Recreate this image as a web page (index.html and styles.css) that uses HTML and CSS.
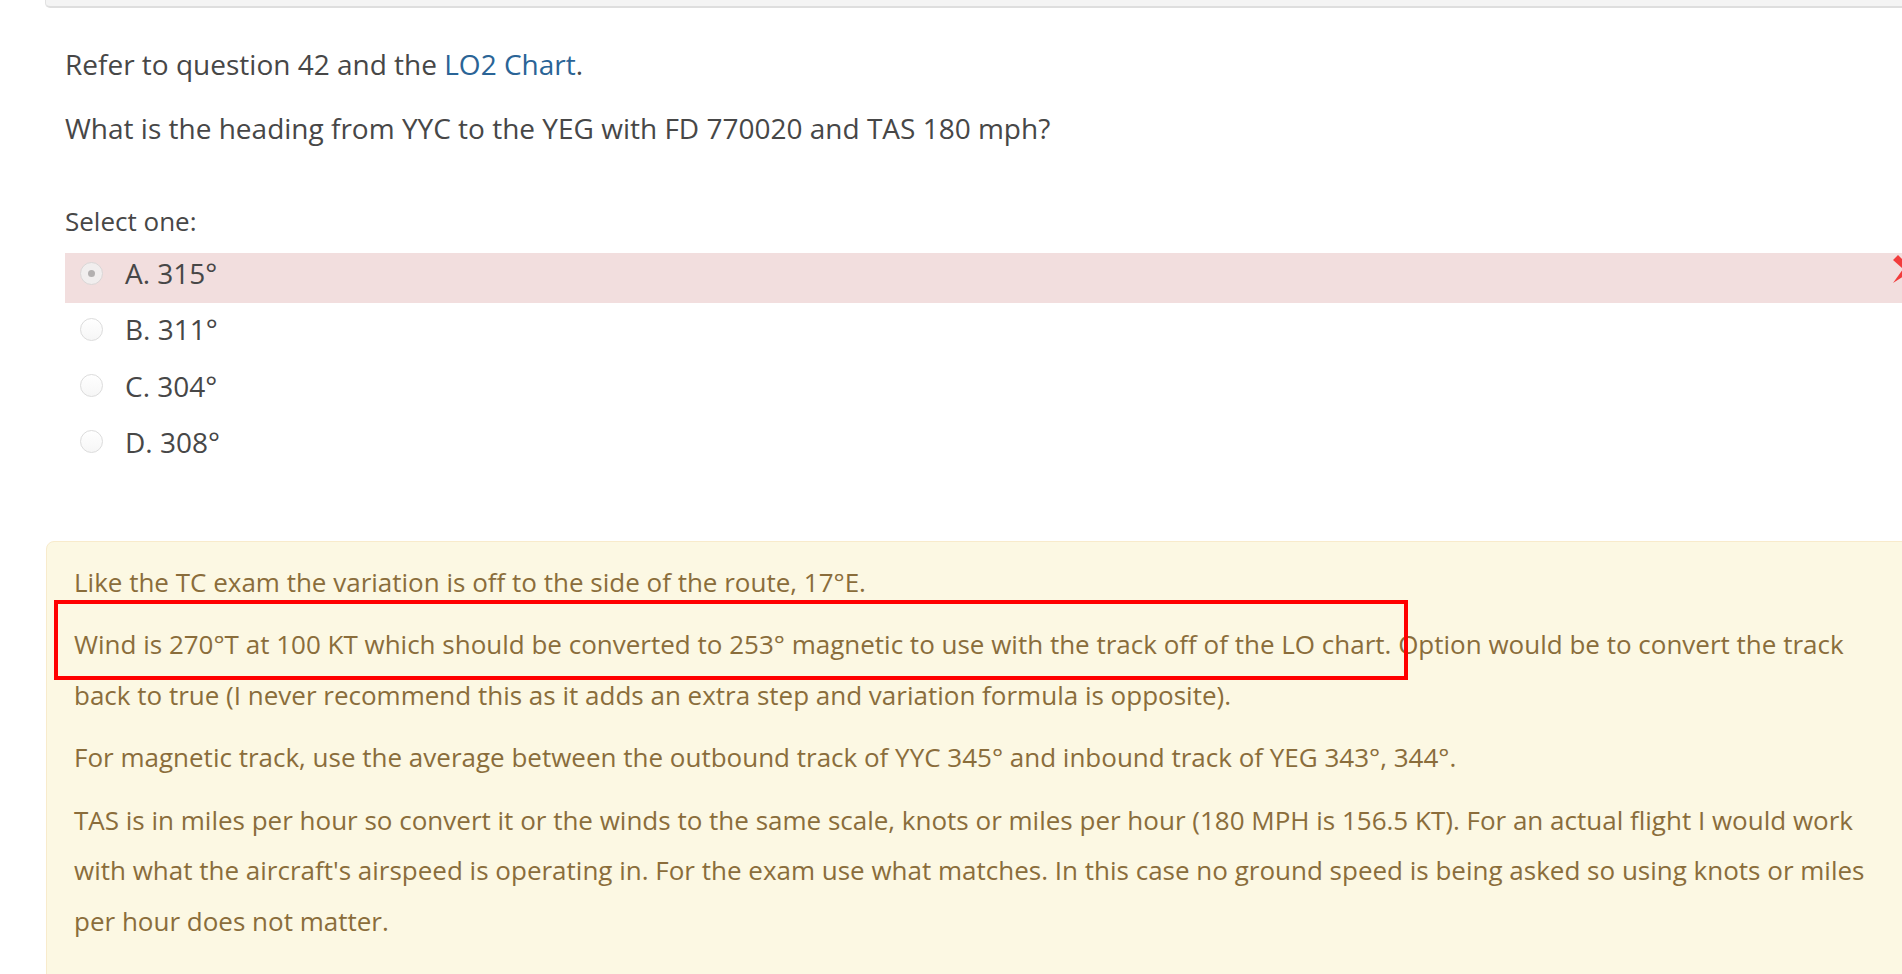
FILE: index.html
```html
<!DOCTYPE html>
<html lang="en">
<head>
<meta charset="utf-8">
<title>Question</title>
<link rel="stylesheet" href="styles.css">
</head>
<body>
<div class="page">
  <div class="topbar"></div>
  <div class="que">
    <div class="qtext">
      <p>Refer to question 42 and the <a class="link" href="#">LO2 Chart</a>.</p>
      <p>What is the heading from YYC to the YEG with FD 770020 and TAS 180 mph?</p>
    </div>
    <div class="ablock">
      <div class="prompt">Select one:</div>
      <div class="answer">
        <div class="opt incorrect">
          <span class="radio checked"></span>
          <span class="label">A. 315°</span>
          <svg class="xicon" viewBox="0 0 28 28" width="28" height="28" aria-hidden="true">
            <path d="M0 5 L5 0 L14 9 L24 0 L28 4 L18 14 L27 23 L23 27 L14 19 L0 28 L10 14 Z" fill="#f23c3c"/>
          </svg>
        </div>
        <div class="opt"><span class="radio"></span><span class="label">B. 311°</span></div>
        <div class="opt"><span class="radio"></span><span class="label">C. 304°</span></div>
        <div class="opt"><span class="radio"></span><span class="label">D. 308°</span></div>
      </div>
    </div>
  </div>
  <div class="feedback">
    <p>Like the TC exam the variation is off to the side of the route, 17°E.</p>
    <p>Wind is 270°T at 100 KT which should be converted to 253° magnetic to use with the track off of the LO chart. Option would be to convert the track back to true (I never recommend this as it adds an extra step and variation formula is opposite).</p>
    <p>For magnetic track, use the average between the outbound track of YYC 345° and inbound track of YEG 343°, 344°.</p>
    <p>TAS is in miles per hour so convert it or the winds to the same scale, knots or miles per hour (180 MPH is 156.5 KT). For an actual flight I would work with what the aircraft's airspeed is operating in. For the exam use what matches. In this case no ground speed is being asked so using knots or miles per hour does not matter.</p>
    <p>Using the flight computer, set the wind of 253° at 100 KT and the track of 344° with the TAS of 156.5 KT to find the heading.</p>
  </div>
  <div class="annot"></div>
</div>
</body>
</html>
```
FILE: styles.css
```css
html, body {
  margin: 0;
  padding: 0;
  overflow: hidden;
  background: #ffffff;
}

body {
  font-family: "Open Sans", "Noto Sans", sans-serif;
  color: #474747;
}

.page {
  position: relative;
  width: 1925px;
}

.topbar {
  margin-left: 45px;
  height: 6px;
  background: #f4f4f4;
  border-left: 1px solid #e2e2e2;
  border-bottom: 2px solid #dedede;
  border-bottom-left-radius: 5px;
}

.que {
  margin-left: 65px;
}

.qtext {
  padding-top: 35px;
  font-size: 28px;
  line-height: 42px;
}

.qtext p {
  margin: 0 0 22px 0;
}

.qtext p:last-child {
  margin-bottom: 0;
}

.link {
  color: #2a6496;
  text-decoration: none;
}

.ablock {
  margin-top: 51px;
}

.prompt {
  font-size: 26px;
  line-height: 42px;
  margin-bottom: 11px;
}

.answer {
  display: flex;
  flex-direction: column;
  gap: 6.3px;
}

.opt {
  display: flex;
  align-items: center;
  height: 50px;
  box-sizing: border-box;
  padding: 0 4px 10px 15px;
  font-size: 28px;
  line-height: 40px;
}

.opt.incorrect {
  background: #f2dede;
}

.radio {
  flex: none;
  width: 23px;
  height: 23px;
  box-sizing: border-box;
  border-radius: 50%;
  border: 1px solid #dcdcdc;
  background: linear-gradient(#ffffff, #f6f6f6);
  margin-right: 22px;
  position: relative;
}

.radio.checked {
  background: #f1eeee;
  border-color: #dad6d6;
}

.radio.checked::after {
  content: "";
  position: absolute;
  left: 7px;
  top: 7px;
  width: 7px;
  height: 7px;
  border-radius: 50%;
  background: #b3b0b0;
}

.label {
  white-space: nowrap;
}

.xicon {
  flex: none;
  margin-left: auto;
  align-self: flex-start;
  margin-top: 2px;
}

.feedback {
  margin-top: 69px;
  margin-left: 46px;
  width: 1871px;
  box-sizing: border-box;
  background: #fcf8e3;
  border: 1px solid #f8ebcc;
  border-radius: 8px;
  padding: 15px 26px 20px 27px;
  color: #8a6d3b;
  font-size: 26px;
  line-height: 50.5px;
}

.feedback p {
  margin: 0 0 12px 0;
}

.annot {
  position: absolute;
  left: 54px;
  top: 600px;
  width: 1354px;
  height: 80px;
  box-sizing: border-box;
  border: 4px solid #ff0000;
}
```
